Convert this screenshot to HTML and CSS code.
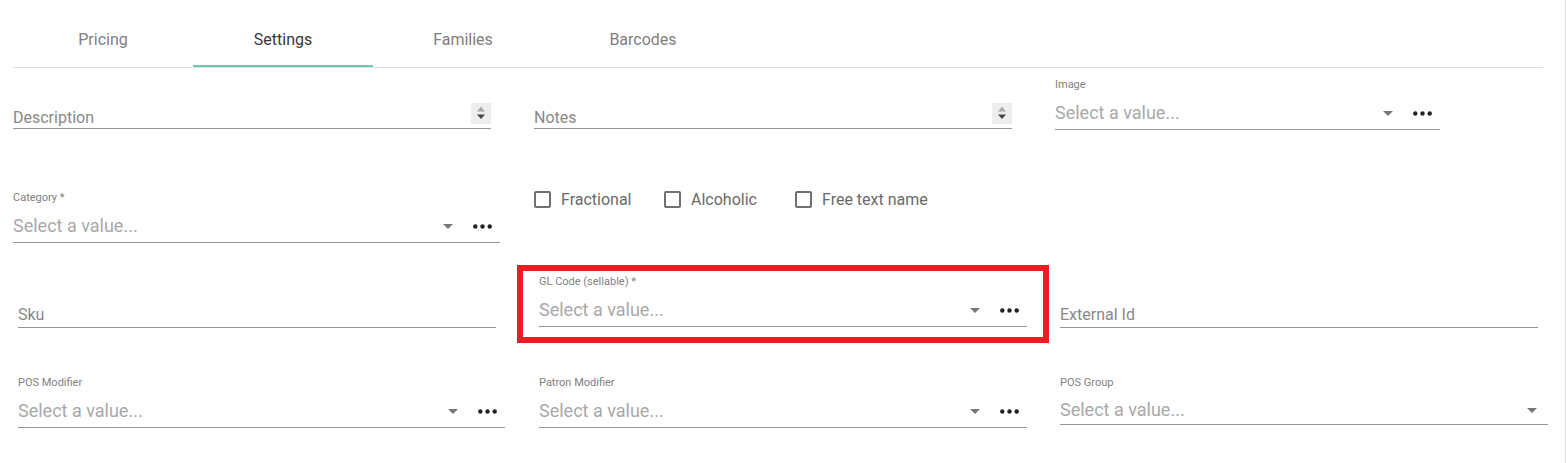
FILE: index.html
```html
<!DOCTYPE html>
<html lang="en">
<head>
<meta charset="utf-8">
<title>Settings</title>
<link rel="stylesheet" href="styles.css">
</head>
<body>
<div class="page">
  <nav class="tabs">
    <div class="tab">Pricing</div>
    <div class="tab active">Settings</div>
    <div class="tab">Families</div>
    <div class="tab">Barcodes</div>
  </nav>

  <div class="row row1">
    <div class="tfield w478">
      <span class="tph">Description</span>
      <svg class="spin" viewBox="0 0 20 21"><rect width="20" height="21" fill="#eeeeee"/><polygon points="6,8.5 14,8.5 10,3.5" fill="#a9a9a9"/><polygon points="6,11.5 14,11.5 10,16" fill="#444"/></svg>
    </div>
    <div class="tfield w478">
      <span class="tph">Notes</span>
      <svg class="spin" viewBox="0 0 20 21"><rect width="20" height="21" fill="#eeeeee"/><polygon points="6,8.5 14,8.5 10,3.5" fill="#a9a9a9"/><polygon points="6,11.5 14,11.5 10,16" fill="#444"/></svg>
    </div>
    <div class="sfield w385">
      <div class="lbl">Image</div>
      <div class="sctrl">
        <span class="sph">Select a value...</span>
        <svg class="arrow" viewBox="0 0 10 5"><polygon points="0,0 10,0 5,5" fill="#777"/></svg>
        <svg class="dots" viewBox="0 0 19 5"><circle cx="2.3" cy="2.5" r="2.2" fill="#222"/><circle cx="9.5" cy="2.5" r="2.2" fill="#222"/><circle cx="16.7" cy="2.5" r="2.2" fill="#222"/></svg>
      </div>
    </div>
  </div>

  <div class="row row2">
    <div class="sfield w487 top61">
      <div class="lbl">Category *</div>
      <div class="sctrl">
        <span class="sph">Select a value...</span>
        <svg class="arrow" viewBox="0 0 10 5"><polygon points="0,0 10,0 5,5" fill="#777"/></svg>
        <svg class="dots" viewBox="0 0 19 5"><circle cx="2.3" cy="2.5" r="2.2" fill="#222"/><circle cx="9.5" cy="2.5" r="2.2" fill="#222"/><circle cx="16.7" cy="2.5" r="2.2" fill="#222"/></svg>
      </div>
    </div>
    <div class="checks">
      <label class="check c130"><span class="box"></span><span class="ctext">Fractional</span></label>
      <label class="check c131"><span class="box"></span><span class="ctext">Alcoholic</span></label>
      <label class="check"><span class="box"></span><span class="ctext">Free text name</span></label>
    </div>
  </div>

  <div class="row row3">
    <div class="tfield w478 sku">
      <span class="tph pb3">Sku</span>
    </div>
    <div class="highlight">
      <div class="sfield w488">
        <div class="lbl">GL Code (sellable) *</div>
        <div class="sctrl">
          <span class="sph">Select a value...</span>
          <svg class="arrow" viewBox="0 0 10 5"><polygon points="0,0 10,0 5,5" fill="#777"/></svg>
          <svg class="dots" viewBox="0 0 19 5"><circle cx="2.3" cy="2.5" r="2.2" fill="#222"/><circle cx="9.5" cy="2.5" r="2.2" fill="#222"/><circle cx="16.7" cy="2.5" r="2.2" fill="#222"/></svg>
        </div>
      </div>
    </div>
    <div class="tfield w478 ext">
      <span class="tph pb3">External Id</span>
    </div>
  </div>

  <div class="row row4">
    <div class="sfield w487">
      <div class="lbl">POS Modifier</div>
      <div class="sctrl">
        <span class="sph">Select a value...</span>
        <svg class="arrow" viewBox="0 0 10 5"><polygon points="0,0 10,0 5,5" fill="#777"/></svg>
        <svg class="dots" viewBox="0 0 19 5"><circle cx="2.3" cy="2.5" r="2.2" fill="#222"/><circle cx="9.5" cy="2.5" r="2.2" fill="#222"/><circle cx="16.7" cy="2.5" r="2.2" fill="#222"/></svg>
      </div>
    </div>
    <div class="sfield w488">
      <div class="lbl">Patron Modifier</div>
      <div class="sctrl">
        <span class="sph">Select a value...</span>
        <svg class="arrow" viewBox="0 0 10 5"><polygon points="0,0 10,0 5,5" fill="#777"/></svg>
        <svg class="dots" viewBox="0 0 19 5"><circle cx="2.3" cy="2.5" r="2.2" fill="#222"/><circle cx="9.5" cy="2.5" r="2.2" fill="#222"/><circle cx="16.7" cy="2.5" r="2.2" fill="#222"/></svg>
      </div>
    </div>
    <div class="sfield w488">
      <div class="lbl">POS Group</div>
      <div class="sctrl nodots">
        <span class="sph">Select a value...</span>
        <svg class="arrow" viewBox="0 0 10 5"><polygon points="0,0 10,0 5,5" fill="#777"/></svg>
      </div>
    </div>
  </div>
</div>
</body>
</html>
```

FILE: styles.css
```css
* { box-sizing: border-box; }

body {
  margin: 0;
  background: #ffffff;
  font-family: Roboto, "Noto Sans", "Liberation Sans", sans-serif;
}

.page {
  width: 1566px;
  height: 463px;
  border-right: 1px solid #dadada;
  overflow: hidden;
}

/* Tabs */
.tabs {
  display: flex;
  margin-left: 13px;
  width: 1530px;
  height: 68px;
  border-bottom: 1px solid #e0e0e0;
}

.tab {
  width: 180px;
  height: 67px;
  padding-top: 30px;
  text-align: center;
  font-size: 16px;
  line-height: 19px;
  color: #7e7e7e;
}

.tab.active {
  color: #383838;
  border-bottom: 2px solid #6dcaa4;
}

/* Rows */
.row { display: flex; }

.row1 {
  height: 62px;
  padding-left: 13px;
  gap: 43px;
  align-items: flex-end;
}

.row2 {
  height: 113px;
  padding-left: 13px;
  align-items: flex-start;
}

.row3 {
  height: 100px;
  padding-left: 18px;
  align-items: flex-end;
}

.row4 {
  height: 120px;
  padding-left: 18px;
  align-items: flex-start;
  padding-top: 33px;
}

.row4 .sfield + .sfield { margin-left: 34px; }
.row4 .sfield + .sfield + .sfield { margin-left: 33px; }

.w478 { width: 478px; }
.w385 { width: 385px; }
.w487 { width: 487px; }
.w488 { width: 488px; }
.top61 { margin-top: 61px; }

/* Text field */
.tfield {
  display: flex;
  align-items: flex-end;
  height: 29px;
  border-bottom: 1px solid #949494;
  margin-bottom: 1px;
}

.tph {
  flex: 1;
  font-size: 16px;
  line-height: 19px;
  color: #888888;
  padding-bottom: 1px;
}

.tph.pb3 { padding-bottom: 3px; }

.spin {
  width: 20px;
  height: 21px;
  margin-bottom: 4px;
  display: block;
}

.sku { margin-bottom: 15px; }
.ext { margin-left: 11px; margin-bottom: 15px; }

/* Select field */
.lbl {
  height: 13px;
  font-size: 11px;
  line-height: 13px;
  color: #808080;
}

.sctrl {
  display: flex;
  align-items: center;
  height: 39px;
  padding-top: 6px;
  padding-right: 8px;
  border-bottom: 1px solid #949494;
}

.sctrl.nodots {
  height: 36px;
  padding-top: 7px;
  padding-right: 11px;
}

.sph {
  flex: 1;
  font-size: 18px;
  line-height: 22px;
  color: #a8a8a8;
}

.arrow {
  display: block;
  width: 10px;
  height: 5px;
}

.dots {
  display: block;
  width: 19px;
  height: 5px;
  margin-left: 20px;
}

/* Checkboxes */
.checks {
  display: flex;
  margin-left: 34px;
  margin-top: 60px;
}

.check {
  display: flex;
  align-items: center;
  height: 19px;
}

.c130 { width: 130px; }
.c131 { width: 131px; }

.box {
  width: 17px;
  height: 17px;
  border: 2px solid #707070;
  border-radius: 2px;
}

.ctext {
  margin-left: 10px;
  font-size: 16px;
  line-height: 19px;
  color: #6a6a6a;
}

/* Highlight box */
.highlight {
  width: 532px;
  margin-left: 21px;
  border: 6px solid #ed1c24;
  padding: 4px 16px 10px 16px;
}
```
